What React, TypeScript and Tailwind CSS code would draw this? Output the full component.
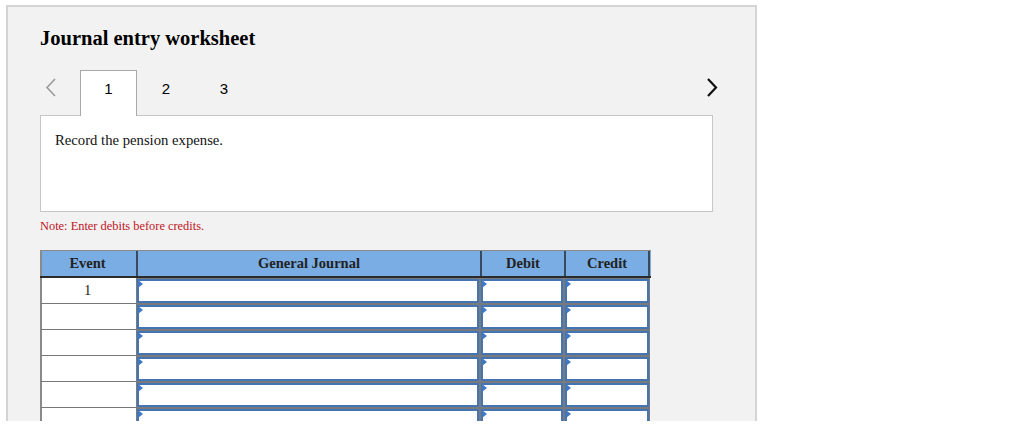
const serif = { fontFamily: '"Liberation Serif", "Times New Roman", serif' };

function InputCell({ width }: { width: string }) {
  return (
    <div className={`${width} relative border border-[#7a7a7a] bg-white`}>
      <div className="h-full w-full border-2 border-[#4375b5] bg-white" />
      <span className="absolute left-[1px] top-[1px] h-0 w-0 border-y-[4px] border-l-[5px] border-y-transparent border-l-[#3f79c4]" />
    </div>
  );
}

function Row({ event }: { event?: string }) {
  return (
    <div className="flex h-[26px]">
      <div
        className="flex w-[96px] items-center justify-center border-b border-l-2 border-[#8a8a8a] border-b-[#777] bg-white pr-[3px] text-[14.5px] text-[#222]"
        style={serif}
      >
        {event}
      </div>
      <InputCell width="w-[344px]" />
      <InputCell width="w-[84px]" />
      <InputCell width="w-[86px]" />
    </div>
  );
}

export default function App() {
  return (
    <div className="h-[426px] w-[1024px] overflow-hidden bg-white">
      <div className="ml-[6px] mt-[5px] h-[416px] w-[751px] overflow-hidden border-x-2 border-t-2 border-[#d4d4d4] bg-[#f2f2f2] pl-[32px] pt-[18px]">
        <h1 className="text-[20.5px] font-bold leading-[26px] text-black" style={serif}>
          Journal entry worksheet
        </h1>

        {/* Tabs */}
        <div className="mt-[19px] flex h-[45px] items-stretch" style={{ fontFamily: '"Liberation Sans", Arial, sans-serif' }}>
          <div className="w-[40px] pl-[4px] pt-[8px]">
            <svg width="14" height="20" viewBox="0 0 14 20">
              <polyline points="11,1 3,9.5 11,18" fill="none" stroke="#9a9a9a" strokeWidth="1.6" />
            </svg>
          </div>
          <div className="relative z-10 -mb-px w-[57px] border-x border-t border-[#a9a9a9] bg-white pt-[9px] text-center text-[15px] leading-[17px] text-black">
            1
          </div>
          <div className="w-[58px] pt-[10px] text-center text-[15px] leading-[17px] text-black">2</div>
          <div className="w-[58px] pt-[10px] text-center text-[15px] leading-[17px] text-black">3</div>
          <div className="flex flex-1 items-start justify-end pr-[37px] pt-[8px]">
            <svg width="12" height="20" viewBox="0 0 12 20">
              <polyline points="2,1 10,9.5 2,18" fill="none" stroke="#111" strokeWidth="2.2" />
            </svg>
          </div>
        </div>

        {/* Prompt box */}
        <div className="h-[97px] w-[673px] border border-[#c6c6c6] bg-white pl-[14px] pt-[13px]">
          <p className="text-[14.7px] text-[#111]" style={serif}>
            Record the pension expense.
          </p>
        </div>

        <p className="mt-[6px] text-[12.4px] leading-[16px] text-[#c0141e]" style={serif}>
          Note: Enter debits before credits.
        </p>

        {/* Table */}
        <div className="mt-[16px] w-[611px]" style={serif}>
          <div className="flex h-[28px] border-t border-[#8a8a8a] border-b-2 border-b-[#2b2b2b] bg-[#7aade3] text-[14.5px] font-bold text-[#222]">
            <div className="flex w-[96px] items-center justify-center border-l-2 border-[#8a8a8a] pr-[3px]">Event</div>
            <div className="flex w-[344px] items-center justify-center border-l-2 border-[#3a4a5e]">General Journal</div>
            <div className="flex w-[84px] items-center justify-center border-l-2 border-[#3a4a5e]">Debit</div>
            <div className="flex w-[86px] items-center justify-center border-x-2 border-[#3a4a5e]">Credit</div>
          </div>
          <Row event="1" />
          <Row />
          <Row />
          <Row />
          <Row />
          <Row />
        </div>
      </div>
    </div>
  );
}
